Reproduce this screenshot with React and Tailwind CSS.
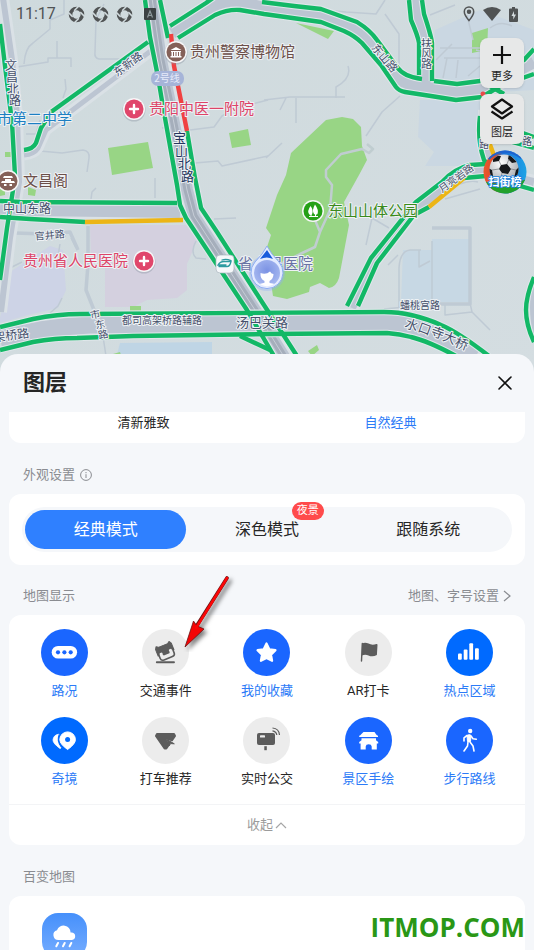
import { useState } from 'react';

const GREEN = '#12b866';
const ROAD = '#bcc5d2';

const lanes = [
  'M0 24L5 66L12 122L15 176M13 190L7 228L0 280',
  'M148 42L51 112L41 128L36 143Q33 149 24 150',
  'M170 26L206 3L213 -2',
  'M178 38L215 15Q228 9 240 10L264 14L321 22L344 31Q355 36 362 43L381 65L396 87Q399 91 405 92L431 96L456 100L482 97L500 86L534 74',
  'M262 2L294 6L321 9L357 22Q370 30 377 40L397 67Q404 77 422 79M434 81L457 84L480 81L524 60L534 49',
  'M145 0L150 37L158 77L163 107L177 185L180 205L186 218L247 310L274 356',
  'M160 0L168 38M187 131L195 178L201 208L217 232L262 302L277 325L297 356',
  'M0 201L20 202L177 203M0 217L30 219L85 222',
  'M0 327L33 319Q58 314 80 314L384 312Q399 312 411 315Q428 319 441 325Q458 332 489 356',
  'M0 350L33 342Q55 338 77 338L133 336L270 334L387 333Q400 334 411 337Q428 341 456 356',
  'M240 336L270 350',
  'M347 306L371 258L416 202L442 182Q454 169 470 165L486 164',
  'M358 306L377 263L414 215L429 207M464 178L486 176L534 190',
  'M480 116Q477 140 484 160L494 172M490 86L504 94M512 142L534 148M520 132L534 137',
  'M534 277Q526 296 526 310Q526 325 534 342',
  'M409 0L411 20Q418 36 419 43L419 75M422 0L424 14Q431 35 432 43L432 81',
];

const bands = [
  { d: 'M3 -2L12 60L17 117L19 182L10 238L1 312', w: 6 },
  { d: 'M152 50L62 118L46 130L38 148Q34 154 24 155', w: 5 },
  { d: 'M172 33L212 8Q226 2 240 2L264 8L321 15L352 26Q364 34 371 43L389 68Q400 83 412 86L457 92L484 89L534 62', w: 12 },
  { d: 'M152 -2L161 60L171 108L187 190L194 216L255 310L286 360', w: 12 },
  { d: 'M0 209L30 210L180 212', w: 12 },
  { d: 'M0 338L40 330Q65 326 90 325L385 323Q405 323 420 328Q445 336 474 358', w: 17 },
  { d: 'M352 308L374 261L414 210L436 194L458 173L486 170L534 182', w: 8 },
  { d: 'M416 -2L418 18L426 45L426 88', w: 9 },
  { d: 'M484 110Q483 136 490 162', w: 6 },
  { d: 'M536 286Q530 305 536 334', w: 6 },
];

const alleys = [
  'M64 0V14L50 20V29L33 43Q25 48 24 64M57 41V58M17 67L48 62V58H71V67M65 79L66 89L63 98',
  'M104 4L96 20L95 52Q94 58 99 59H137M40 151L62 153L83 150Q90 151 89 158L87 172M26 134H36L40 120M162 128L182 124',
  'M195 163L218 161L222 166L268 156M190 130L214 127L222 116L236 108L268 100',
  'M264 8L302 8L346 12L376 14L385 0M385 14L399 34V65M348 66Q352 78 336 87V98M264 100L290 97H345M296 98V123M286 98L280 110M400 96L382 112L366 136M266 158L282 143',
  'M430 15L455 5M440 48H480M444 58H482M447 58L443 78M458 60L456 78M436 60L452 44M467 15L473 40M476 50L520 60M468 76L480 66M490 28Q500 20 512 26',
  'M91 199L92 192L96 188M155 178V198M15 233L45 234M46 240L66 236M60 244L58 256M71 238L76 248',
  'M214 219L236 218M196 241Q190 252 196 258L206 259M88 226V264L86 290L102 330L106 356M10 268L22 262M62 298L58 306L50 313',
  'M366 245L372 218L389 228M388 265L398 255M399 307V268Q400 251 410 250H421M419 250V267L430 261M432 241V304M437 304L384 309M445 304V315L472 312L490 330M470 303L472 312M445 199L480 189M460 184Q470 180 478 182',
];

const halo = { stroke: '#eef2f5', strokeWidth: 2, strokeLinejoin: 'round', paintOrder: 'stroke' };

function RoadText({ children, size = 12, ...rest }) {
  return (
    <text fontSize={size} fill="#46506b" {...halo} {...rest}>
      {children}
    </text>
  );
}

function Cross({ x, y }) {
  return (
    <g>
      <circle cx={x} cy={y + 1} r="11.5" fill="#8a94a0" opacity=".4" />
      <circle cx={x} cy={y} r="11" fill="#f7f7f8" />
      <circle cx={x} cy={y} r="9.5" fill="#e0466b" />
      <path d={`M${x - 4} ${y}h8M${x} ${y - 4}v8`} stroke="#fff" strokeWidth="2.4" strokeLinecap="round" />
    </g>
  );
}

function CityMap() {
  return (
    <svg
      viewBox="0 0 534 374"
      className="block w-full"
      role="img"
      aria-label="地图"
      fontFamily="'Noto Sans CJK SC', sans-serif"
      fill="none"
    >
      <defs>
        <linearGradient id="land" x1="0" y1="0" x2="1" y2="1">
          <stop offset="0" stopColor="#cfdadd" />
          <stop offset="1" stopColor="#d4dde1" />
        </linearGradient>
        <radialGradient id="face" cx=".5" cy=".4" r=".6">
          <stop offset="0" stopColor="#7c93e4" />
          <stop offset="1" stopColor="#a7b9f0" />
        </radialGradient>
      </defs>
      <rect width="534" height="374" fill="url(#land)" />

      <path d="M435 30L480 10L534 30V90L430 96ZM420 100H480V166H425L434 152L418 137Z" fill="#cad7e2" />
      <path d="M403 250H432V239H470V302H401Z" fill="#c7d8e4" />
      <path d="M120 343L212 342V374H112Z" fill="#bfd5e5" />
      <path d="M0 318L10 272L50 246L63 250L66 290L58 308L28 315L0 323Z" fill="#cdd3e6" />
      <path d="M90 225H186L197 241L187 264V290L177 298L147 300L133 307H105V267L91 255Z" fill="#d4d0df" />

      <g fill="#98d585">
        <path d="M326 120L342 117L353 119L361 127L362 146L367 160L359 175L344 202L349 225L339 278Q336 287 329 288L320 283L310 287L309 292L287 299L273 296L266 250L271 235L266 228L277 195L286 175L291 153Z" />
        <path d="M108 148L148 142L153 168L112 175ZM229 133L248 129L251 145L232 148ZM472 33L488 28L487 50L472 53ZM296 23L334 31L328 39ZM28 187L36 190L35 196L28 195ZM5 152H11V157H5ZM130 306H141V311H130ZM308 351L317 345L319 350L312 356ZM113 354L120 352L122 358H112ZM0 189L5 190V195L0 196Z" />
      </g>
      <path d="M367 144L373 149L369 153L362 149L341 154L326 170V177L332 185L330 210L320 232L315 220M320 232L315 247L300 254L280 264" stroke="#c0cdd0" strokeWidth="2.5" strokeLinejoin="round" />

      <g stroke="#bfcad4" strokeWidth="1.5" strokeLinejoin="round">
        {alleys.map((d) => <path key={d} d={d} />)}
        <path d="M432 228H470V304H437M15 233L45 234L70 232L78 250M88 226V264L86 290L102 330" strokeWidth="3.5" />
      </g>

      {bands.map((b) => <path key={b.d} d={b.d} stroke="#dae1e6" strokeWidth={b.w + 6} strokeLinejoin="round" />)}
      {bands.map((b) => <path key={b.d} d={b.d} stroke={ROAD} strokeWidth={b.w} strokeLinejoin="round" />)}
      <path d="M152 -2L161 60L171 108L187 190L194 216L255 310L286 360" stroke="#a5aebb" strokeWidth="7" />
      <path d="M152 -2L161 60L171 108L187 190L194 216L255 310L286 360" stroke="#c6cdd7" strokeWidth="1" />

      <g stroke="#dfe7ea" strokeWidth="6.5" strokeLinejoin="round">
        {lanes.map((d) => <path key={d} d={d} />)}
      </g>
      <g stroke={GREEN} strokeWidth="4.4" strokeLinejoin="round">
        {lanes.map((d) => <path key={d} d={d} />)}
      </g>
      <path d="M171 34L174 66L187 131" stroke="#f04141" strokeWidth="4.4" />
      <path d="M85 222L183 220M429 207L464 178M489 142L495 158" stroke="#ecb516" strokeWidth="4.4" />
      <circle cx="483" cy="94" r="2.5" fill="#e84a4a" />

      <RoadText x="5 6 7 9" y="70 82 94 105">文昌北路</RoadText>
      <RoadText x="173 175 178 181" y="142 156 168 181" size={13} fill="#25365f">宝山北路</RoadText>
      <RoadText transform="translate(117 77) rotate(-36)" size={11}>东新路</RoadText>
      <RoadText transform="translate(371 48) rotate(50)" size={11}>东山路</RoadText>
      <RoadText x="421 421 421" y="48 58 68" size={11}>扶风路</RoadText>
      <RoadText x="3" y="213">中山东路</RoadText>
      <RoadText transform="translate(35 240) rotate(-5)" size={10}>官井路</RoadText>
      <RoadText transform="translate(-6 342) rotate(-8)">架桥路</RoadText>
      <RoadText x="91 96 99" y="319 329 339" size={10} rotate="-12">市东路</RoadText>
      <RoadText x="122" y="324" size={10}>都司高架桥路辅路</RoadText>
      <RoadText x="236" y="327" size={13}>汤巴关路</RoadText>
      <RoadText x="400" y="309" size={10}>蟠桃宫路</RoadText>
      <RoadText x="404 417 430 442 454" y="327 331 335 340 346" size={13} rotate="20">水口寺大桥</RoadText>
      <RoadText transform="translate(442 193) rotate(-36)" size={10}>月亮岩路</RoadText>
      <RoadText x="479" y="148" size={10}>路</RoadText>
      <RoadText x="522" y="145" size={10}>路</RoadText>

      <rect x="151" y="71" width="33" height="15" rx="7" fill="#a6b4d8" />
      <text x="167" y="82" fontSize="10" textAnchor="middle" fill="#e6ebfa">2号线</text>

      <circle cx="176" cy="53" r="11.5" fill="#8a94a0" opacity=".4" />
      <circle cx="176" cy="52" r="11" fill="#f7f7f8" />
      <circle cx="176" cy="52" r="9.5" fill="#846058" />
      <path d="M170.500 50L176 47L181.500 50ZM171 51h10v1h-10zM171.500 52h1.500v4h-1.500zM174 52h1.500v4H174zM176.500 52H178v4h-1.500zM179 52h1.500v4H179zM170.500 56h11v1.500h-11z" fill="#fff" />
      <circle cx="8" cy="181" r="11" fill="#f7f7f8" />
      <circle cx="8" cy="181" r="9.5" fill="#846058" />
      <path d="M4 176h8l1 2H3zM5 179h6v2H5zM2 181h12l1 2H1zM4 184h2.500v2H4zM9.500 184H12v2H9.500z" fill="#fff" />
      <Cross x={134} y={109} />
      <Cross x={144} y={261} />
      <circle cx="313" cy="211" r="11" fill="#f7f7f8" />
      <circle cx="313" cy="211" r="9.500" fill="#25a016" />
      <path d="M310.500 206q-3.500 5-1.500 8q1 1.500 3 .5q2-4-1.500-8.500zM315 204.500q-3.500 6-1 9.500q2 1.500 3.500 0q1.500-4-2.500-9.500z" fill="#fff" />
      <path d="M311 213v3.500M315.500 213v3.500M309 216.500h9" stroke="#fff" />

      <g fontSize="15" {...halo}>
        <text x="190" y="57" fill="#6c4f49">贵州警察博物馆</text>
        <text x="23" y="186" fill="#6c4f49">文昌阁</text>
        <text x="149" y="114" fill="#dd4468">贵阳中医一附院</text>
        <text x="23" y="266" fill="#dd4468">贵州省人民医院</text>
        <text x="328" y="216" fill="#3a8a1c">东山山体公园</text>
        <text x="-3" y="124" fill="#1c7fc2">市第二中学</text>
        <text x="238" y="269" fill="#6873a3">省人民医院</text>
      </g>

      <rect x="216" y="255" width="18" height="18" rx="4" fill="#f5f8fa" stroke="#a9b4bd" strokeWidth=".7" />
      <path d="M219 266.500h8q3 0 4-5h-7q-4 0-6 3.500h8M222 260q4-1.500 9 .5" stroke="#2c9aa0" strokeWidth="1.300" strokeLinecap="round" />

      <circle cx="267" cy="273" r="18" fill="#8eb0f7" opacity=".35" />
      <path d="M267 246Q263 254 255 262A16 16 0 1 0 279 262Q271 254 267 246Z" fill="#e3ebff" stroke="#8fadf2" />
      <path d="M267 250L273 259Q267 256 260 259Z" fill="#185bdc" />
      <circle cx="267" cy="273" r="13" fill="url(#face)" />
      <path d="M260.500 273Q266 275 270 271.500Q271.500 274 273.500 274Q273.500 279 269.500 281V283Q273 283.500 274.500 284Q267 288.500 259.500 284L264.500 282.800V281Q260 279 260.500 273Z" fill="#fff" />
    </svg>
  );
}

function Shutter() {
  return (
    <svg viewBox="0 0 18 18" className="size-[17px]" fill="none">
      <circle cx="9" cy="9" r="6.300" stroke="#505354" strokeWidth="3.800" />
      <path d="M11.500 0L6.500 5M18 11.500L13 6.500M6.500 18L11.500 13M0 6.500L5 11.500" stroke="#d0dadd" strokeWidth="1.600" />
    </svg>
  );
}

function StatusBar() {
  return (
    <div className="absolute inset-x-0 top-0 flex h-7 items-center pr-4 pl-4 text-[#505354]">
      <span className="w-[52px] text-base">11:17</span>
      <div className="flex items-center gap-[7px]">
        <Shutter />
        <Shutter />
        <Shutter />
        <svg viewBox="0 0 12 12" className="ml-1 size-3">
          <rect width="12" height="12" rx="1" fill="#3c4143" />
          <path d="M3.500 9.500L6 3L8.500 9.500M4.500 7.500h3" stroke="#8f999c" strokeWidth="1.200" fill="none" />
        </svg>
      </div>
      <div className="ml-auto flex items-center gap-2">
        <svg viewBox="0 0 12 16" className="h-4 w-3" fill="none" stroke="#505354" strokeWidth="1.500">
          <path d="M6 14.500Q1.300 9 1.300 5.700a4.700 4.700 0 0 1 9.400 0Q10.700 9 6 14.500Z" />
          <circle cx="6" cy="5.700" r="1.500" fill="#505354" />
        </svg>
        <svg viewBox="0 0 18 14" className="h-3.5 w-[18px]">
          <path d="M0 3Q9-3 18 3L9 14Z" fill="#505354" />
        </svg>
        <svg viewBox="0 0 9 15" className="h-[15px] w-[9px]">
          <path d="M3 0h3v1.500h2q1 0 1 1V14q0 1-1 1H1q-1 0-1-1V2.500q0-1 1-1h2z" fill="#505354" />
          <path d="M5 4L2.500 9h1.800v3.500L7 7.500H5z" fill="#d5dde0" />
        </svg>
      </div>
    </div>
  );
}

function MapControls() {
  const tile = 'mr-[3px] flex h-[50px] w-11 flex-col items-center justify-between rounded-lg bg-[#e7e8e8] pt-2 pb-[3px] text-[11px] leading-4 text-[#1f1f1f] shadow-sm';
  return (
    <div className="absolute top-[38px] right-[7px] flex flex-col items-end gap-1.5">
      <button className={tile}>
        <svg viewBox="0 0 18 18" className="size-[18px]" stroke="#111" strokeWidth="2.200">
          <path d="M9 0V18M0 9H18" />
        </svg>
        更多
      </button>
      <button className={tile}>
        <svg viewBox="0 0 24 22" className="-mt-1 h-[22px] w-6" fill="none" stroke="#111" strokeWidth="2.200" strokeLinejoin="round">
          <path d="M12 1.500L22 8.500L12 15.500L2 8.500Z" />
          <path d="M1.500 13.500L12 20.500L22.500 13.500" />
        </svg>
        图层
      </button>
      <button className="rounded-full" aria-label="扫街榜">
        <svg viewBox="0 0 44 44" className="size-11">
          <defs>
            <linearGradient id="rim" x1="0" y1="0" x2="1" y2="0">
              <stop offset="0" stopColor="#ee5a2c" />
              <stop offset=".25" stopColor="#d94b2c" />
              <stop offset=".45" stopColor="#1b6fd8" />
              <stop offset="1" stopColor="#1ea4e6" />
            </linearGradient>
            <radialGradient id="ball" cx=".4" cy=".3" r=".7">
              <stop offset="0" stopColor="#fff" />
              <stop offset="1" stopColor="#a5a9ad" />
            </radialGradient>
            <clipPath id="badgeClip"><circle cx="22" cy="22" r="21.500" /></clipPath>
            <clipPath id="ballClip"><circle cx="21" cy="19" r="14.500" /></clipPath>
          </defs>
          <g clipPath="url(#badgeClip)">
            <rect width="44" height="44" fill="url(#rim)" />
            <path d="M6 10Q20-4 38 9L44 0H0Z" fill="#1d63cf" />
            <path d="M0 31Q22 38 44 29V44H0Z" fill="#22a12c" />
            <circle cx="21" cy="19" r="14.500" fill="url(#ball)" />
            <g clipPath="url(#ballClip)" fill="#16181b">
              <path d="M18 15l6-1 4 5-3 5-6-1-3-4zM10 5l8 1-2 5-6 1zM26 4l8 8-5 1-4-4zM5 18l4 2 1 6-4 2zM33 20l3-3v10l-5 1z" />
              <path d="M24 14l2-5M28 19l5 1M16 19l-7 1M16 11l2 4M19 23l-2 8" stroke="#7d8186" strokeWidth=".8" />
            </g>
          </g>
          <text x="22" y="36" textAnchor="middle" fontSize="11" fontWeight="700" fill="#fff" stroke="#1b7fdd" strokeWidth="1.500" paintOrder="stroke">扫街榜</text>
        </svg>
      </button>
    </div>
  );
}

const dark = '#5c5c5c';
const blue = '#1a66ff';
const bright = '#006aff';

const layers = [
  {
    label: '路况', on: true,
    art: (
      <>
        <rect x="10.700" y="17" width="25.400" height="12.600" rx="6.300" fill="#fff" />
        <g fill="#1a66ff"><circle cx="17" cy="23.300" r="2.100" /><circle cx="23.400" cy="23.300" r="2.100" /><circle cx="29.700" cy="23.300" r="2.100" /></g>
      </>
    ),
  },
  {
    label: '交通事件', on: false,
    art: (
      <>
        <path d="M14.800 33.200H32" stroke={dark} strokeWidth="1.900" strokeLinecap="round" />
        <g transform="rotate(-22 23.500 22.500)">
          <path d="M15 17l1.500-2.500L18.500 16H28.500L30.500 14.500L32 17V24H15Z" fill={dark} stroke={dark} strokeLinejoin="round" />
          <path d="M16 21V27Q16 29.800 19 29.800H28Q31 29.800 31 27V21" fill="#ececec" stroke={dark} strokeWidth="1.600" />
          <path d="M15.500 19H31.500V23.500H28L26.500 25.500H20.500L19 23.500H15.500Z" fill={dark} />
          <rect x="17" y="22" width="3" height="2.600" rx="1" fill="#ececec" />
          <rect x="27" y="22" width="3" height="2.600" rx="1" fill="#ececec" />
        </g>
      </>
    ),
  },
  {
    label: '我的收藏', on: true,
    art: <path d="M23.500 14.500L26.300 20.300L32.500 21.200L28 25.600L29.100 31.800L23.500 28.900L17.900 31.800L19 25.600L14.500 21.200L20.700 20.300Z" fill="#fff" stroke="#fff" strokeWidth="2.200" strokeLinejoin="round" />,
  },
  {
    label: 'AR打卡', on: false,
    art: (
      <>
        <path d="M17.300 14.500L16.500 32" stroke={dark} strokeWidth="1.400" strokeLinecap="round" />
        <path d="M17 14.600Q20 12.800 23.500 14.600Q27 16.500 31.500 15Q32.600 14.800 32.500 16L31.900 26Q27.500 28.300 23.500 26.400Q20 24.800 16.800 26.600Z" fill={dark} />
      </>
    ),
  },
  {
    label: '热点区域', on: true, fill: bright,
    art: (
      <g fill="#fff">
        <rect x="12" y="24.600" width="3.800" height="6.100" rx="1" />
        <rect x="17.700" y="20.600" width="3.800" height="10.100" rx="1" />
        <rect x="23.300" y="14.300" width="3.800" height="16.400" rx="1" />
        <rect x="29" y="19.300" width="3.800" height="11.400" rx="1" />
      </g>
    ),
  },
  {
    label: '奇境', on: true, fill: bright,
    art: (
      <>
        <path d="M19 31.500Q12 26.500 12 23Q12.500 17.800 18 17.200Q14.800 24 20 31Z" fill="#fff" stroke="#fff" strokeWidth=".8" strokeLinejoin="round" />
        <path d="M26.600 32.500Q18.800 27 18.800 22.700a7.800 7.800 0 0 1 15.600 0Q34.400 27 26.600 32.500Z" fill="#fff" stroke="#fff" strokeLinejoin="round" />
        <path d="M18.300 17.500Q15.500 23.500 20.500 30" fill="none" stroke={bright} strokeWidth="1.200" />
        <circle cx="26.600" cy="22.600" r="2.500" fill={bright} />
      </>
    ),
  },
  {
    label: '打车推荐', on: false,
    art: (
      <>
        <path d="M15 17H32L33 19L24.300 31.500H22.600L14 19Z" fill={dark} stroke={dark} strokeWidth="2" strokeLinejoin="round" />
        <path d="M24.500 22.600L35 26L30 31" fill="#ececec" />
        <path d="M24.500 22.300L32.300 26.800L28.600 26.600L27 29" fill={dark} stroke={dark} strokeLinejoin="round" />
      </>
    ),
  },
  {
    label: '实时公交', on: false,
    art: (
      <>
        <rect x="14" y="16" width="18" height="12" rx="2" fill={dark} />
        <rect x="17" y="18.200" width="5" height="2.300" rx=".6" fill="#ececec" />
        <rect x="21.300" y="29.200" width="2.500" height="4" fill={dark} />
        <path d="M29.500 11Q36 11.500 36.500 18" stroke={dark} strokeWidth="1.200" fill="none" />
        <path d="M29.500 13.800Q33.300 14.300 33.800 18" stroke={dark} strokeWidth="1.200" fill="none" />
      </>
    ),
  },
  {
    label: '景区手绘', on: true,
    art: (
      <path d="M18.500 15H29.500L31 17.300Q31.800 18.500 33 18.800V20H14.200V18.800Q15.500 18.500 16.200 17.300ZM16.500 21.200H31V23.200L33.200 25V26.400H31.800V32.600H26.700V29.500Q26.500 27.300 23.700 27.300T20.700 29.500V32.600H15.600V26.400H14.200V25L16.500 23.200Z" fill="#fff" />
    ),
  },
  {
    label: '步行路线', on: true,
    art: (
      <>
        <circle cx="24.200" cy="14" r="2.200" fill="#fff" />
        <path d="M21 18.500Q22 17.500 24 17.800L25 18.500L24.500 24.500H21.500Z" fill="#fff" stroke="#fff" strokeLinejoin="round" />
        <g fill="none" stroke="#fff" strokeWidth="1.600" strokeLinecap="round" strokeLinejoin="round">
          <path d="M21 18.500L18 20.800V24" />
          <path d="M25 19L27 21.800L30.300 22.200" />
          <path d="M22 25L21.500 29L18 34" />
          <path d="M24 25L27 29L28 34" />
        </g>
      </>
    ),
  },
];

function LayerButton({ item, onToggle, active }) {
  return (
    <button className="flex flex-col items-center gap-[5px]" aria-pressed={active} onClick={onToggle}>
      <svg viewBox="0 0 47 47" className="size-[47px]">
        <circle cx="23.500" cy="23.500" r="23.500" fill={item.on ? item.fill || blue : '#ececec'} />
        {item.art}
      </svg>
      <span className={active ? 'text-[13px] leading-5 text-[#2c7bf7]' : 'text-[13px] leading-5 text-[#262626]'}>
        {item.label}
      </span>
    </button>
  );
}

const modes = ['经典模式', '深色模式', '跟随系统'];

export default function App() {
  const [mode, setMode] = useState('经典模式');
  const [active, setActive] = useState(layers.filter((l) => l.on).map((l) => l.label));

  const toggle = (label) =>
    setActive((list) => (list.includes(label) ? list.filter((l) => l !== label) : [...list, label]));

  return (
    <div className="relative flex h-screen flex-col overflow-hidden bg-[#f5f7fa] font-['Roboto','Noto_Sans_CJK_SC',sans-serif] text-[#262626]">
      <header className="relative shrink-0">
        <CityMap />
        <StatusBar />
        <MapControls />
      </header>

      <main className="relative -mt-5 flex min-h-0 flex-1 flex-col rounded-t-[18px] bg-[#f5f7fa]">
        <div className="flex h-[58px] shrink-0 items-center justify-between pr-[22px] pl-[23px]">
          <h1 className="text-[22px] leading-8 font-bold">图层</h1>
          <button aria-label="关闭">
            <svg viewBox="0 0 14 14" className="size-3.5" stroke="#111" strokeWidth="1.600" strokeLinecap="round">
              <path d="M1 1L13 13M13 1L1 13" />
            </svg>
          </button>
        </div>

        <div className="min-h-0 flex-1 overflow-hidden px-[9px]">
          <section className="grid h-[31px] grid-cols-2 rounded-b-xl bg-white px-[11px] text-[13px] leading-5">
            <button className="h-[22px]">清新雅致</button>
            <button className="h-[22px] text-[#2c7bf7]">自然经典</button>
          </section>

          <div className="flex h-[51px] items-center gap-[5px] px-3.5 pt-3 text-[13px] leading-5 text-[#8a8c91]">
            <h2>外观设置</h2>
            <svg viewBox="0 0 12 12" className="size-3" fill="none" stroke="#8a8c91">
              <circle cx="6" cy="6" r="5.400" />
              <path d="M6 5.200V9M6 3V4.200" />
            </svg>
          </div>

          <section className="rounded-xl bg-white px-[13px] py-[13px]">
            <div className="grid h-[45px] grid-cols-3 rounded-full bg-[#f5f7fa] p-[3px]">
              {modes.map((name) => (
                <button
                  key={name}
                  aria-pressed={mode === name}
                  onClick={() => setMode(name)}
                  className={
                    mode === name
                      ? 'relative rounded-full bg-[#2f80ff] text-base text-white'
                      : 'relative rounded-full text-base text-[#262626]'
                  }
                >
                  {name}
                  {name === '深色模式' && (
                    <span className="absolute -top-2 right-6 rounded-full bg-[#ff4b4b] px-[5px] text-[11px] leading-[18px] text-white">
                      夜景
                    </span>
                  )}
                </button>
              ))}
            </div>
          </section>

          <div className="flex h-[50px] items-center justify-between px-3.5 pt-3 text-[13px] leading-5 text-[#8a8c91]">
            <h2>地图显示</h2>
            <a href="#settings" className="flex items-center gap-1">
              地图、字号设置
              <svg viewBox="0 0 8 12" className="h-3 w-2" fill="none" stroke="#8a8c91" strokeWidth="1.200">
                <path d="M1 1L7 6L1 11" />
              </svg>
            </a>
          </div>

          <section className="rounded-xl bg-white pt-3.5">
            <div className="grid grid-cols-5 gap-y-4 px-[5px]">
              {layers.map((item) => (
                <LayerButton
                  key={item.label}
                  item={item}
                  active={active.includes(item.label)}
                  onToggle={() => toggle(item.label)}
                />
              ))}
            </div>
            <button className="mt-[15px] flex h-[41px] w-full items-center justify-center gap-0.5 border-t border-[#f3f4f6] text-[13px] text-[#9b9b9b]">
              收起
              <svg viewBox="0 0 12 8" className="h-2 w-3" fill="none" stroke="#a6a6a6" strokeWidth="1.200">
                <path d="M1 7L6 2L11 7" />
              </svg>
            </button>
          </section>

          <h2 className="flex h-[51px] items-center px-3.5 pt-3 text-[13px] leading-5 text-[#8a8c91]">百变地图</h2>

          <section className="rounded-xl bg-white px-[33px] pt-[17px] pb-8">
            <button aria-label="天气" className="block">
              <svg viewBox="0 0 45 45" className="size-[45px]">
                <defs>
                  <linearGradient id="sky" x1="0" y1="0" x2="0" y2="1">
                    <stop offset="0" stopColor="#4690fb" />
                    <stop offset="1" stopColor="#76adff" />
                  </linearGradient>
                </defs>
                <rect width="45" height="45" rx="16" fill="url(#sky)" />
                <path d="M16.500 27a5 5 0 0 1-1.500-9.800a7 7 0 0 1 13.600 2.300h1.400a3.800 3.800 0 0 1 0 7.500Z" fill="#fff" />
                <path d="M16 30L14.300 33.300M22.700 30L21 33.300M29.300 30L27.600 33.300" stroke="#fff" strokeWidth="2" strokeLinecap="round" />
              </svg>
            </button>
          </section>
        </div>
      </main>

      <svg viewBox="0 0 60 80" className="pointer-events-none absolute top-[572px] left-[178px] h-20 w-[60px]">
        <g className="drop-shadow-[3px_3px_2px_rgba(0,0,0,0.5)]">
          <path d="M49 6L18 55" stroke="#6b1414" strokeWidth="3.600" strokeLinecap="round" />
          <path d="M7 75L15.500 49L19 54L26 57Z" fill="#f40505" stroke="#6b1414" strokeWidth=".8" />
          <path d="M49 6L18 56" stroke="#fb0606" strokeWidth="2.600" strokeLinecap="round" />
        </g>
      </svg>
      <p className="pointer-events-none absolute right-[9px] bottom-[5px] font-['Open_Sans',sans-serif] text-[26px] leading-9 font-bold text-[#2a9716]">
        ITMOP.COM
      </p>
    </div>
  );
}
